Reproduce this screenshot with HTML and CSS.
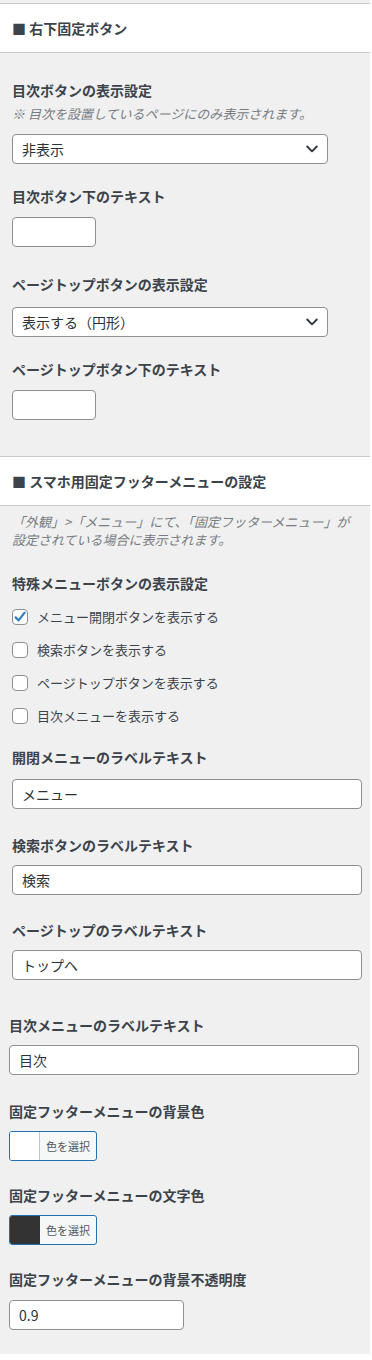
FILE: index.html
```html
<!DOCTYPE html>
<html lang="ja">
<head>
<meta charset="utf-8">
<title>設定</title>
<link rel="stylesheet" href="styles.css">
</head>
<body>
<div class="page">
  <section class="sec sec-first">
    <h2 class="sec-head">■ 右下固定ボタン</h2>
    <div class="sec-body body-1">
      <div class="field">
        <div class="label">目次ボタンの表示設定</div>
        <p class="note">※ 目次を設置しているページにのみ表示されます。</p>
        <div class="select">
          <span>非表示</span>
          <svg class="chev" width="12" height="8" viewBox="0 0 12 8"><path d="M1.2 1.5 L6 6.3 L10.8 1.5" fill="none" stroke="#2c3338" stroke-width="1.8" stroke-linecap="round" stroke-linejoin="round"/></svg>
        </div>
      </div>
      <div class="field mt-22">
        <div class="label">目次ボタン下のテキスト</div>
        <div class="input input-sm"></div>
      </div>
      <div class="field mt-27">
        <div class="label lb-13">ページトップボタンの表示設定</div>
        <div class="select">
          <span>表示する（円形）</span>
          <svg class="chev" width="12" height="8" viewBox="0 0 12 8"><path d="M1.2 1.5 L6 6.3 L10.8 1.5" fill="none" stroke="#2c3338" stroke-width="1.8" stroke-linecap="round" stroke-linejoin="round"/></svg>
        </div>
      </div>
      <div class="field mt-22">
        <div class="label">ページトップボタン下のテキスト</div>
        <div class="input input-sm"></div>
      </div>
    </div>
  </section>

  <section class="sec">
    <h2 class="sec-head">■ スマホ用固定フッターメニューの設定</h2>
    <div class="sec-body body-2">
      <p class="note note-top">「外観」&gt;「メニュー」にて、「固定フッターメニュー」が設定されている場合に表示されます。</p>
      <div class="field mt-24">
        <div class="label lb-14">特殊メニューボタンの表示設定</div>
        <ul class="checks">
          <li class="check">
            <span class="box">
              <svg width="16" height="16" viewBox="0 0 16 16"><path d="M3.6 8.4 L6.6 11.4 L12.6 3.6" fill="none" stroke="#3582c4" stroke-width="2.3" stroke-linecap="round" stroke-linejoin="round"/></svg>
            </span>
            <span>メニュー開閉ボタンを表示する</span>
          </li>
          <li class="check"><span class="box"></span><span>検索ボタンを表示する</span></li>
          <li class="check"><span class="box"></span><span>ページトップボタンを表示する</span></li>
          <li class="check"><span class="box"></span><span>目次メニューを表示する</span></li>
        </ul>
      </div>
      <div class="field mt-21">
        <div class="label lb-12">開閉メニューのラベルテキスト</div>
        <div class="input input-full">メニュー</div>
      </div>
      <div class="field mt-26">
        <div class="label lb-10">検索ボタンのラベルテキスト</div>
        <div class="input input-full">検索</div>
      </div>
      <div class="field mt-25">
        <div class="label lb-10">ページトップのラベルテキスト</div>
        <div class="input input-full">トップへ</div>
      </div>
    </div>
    <div class="sec-body body-3">
      <div class="field">
        <div class="label lb-10">目次メニューのラベルテキスト</div>
        <div class="input input-full">目次</div>
      </div>
      <div class="field mt-26">
        <div class="label lb-10">固定フッターメニューの背景色</div>
        <div class="color-btn">
          <span class="swatch sw-white"></span>
          <span class="color-text">色を選択</span>
        </div>
      </div>
      <div class="field mt-24">
        <div class="label lb-10">固定フッターメニューの文字色</div>
        <div class="color-btn">
          <span class="swatch sw-dark"></span>
          <span class="color-text">色を選択</span>
        </div>
      </div>
      <div class="field mt-24">
        <div class="label">固定フッターメニューの背景不透明度</div>
        <div class="input input-md">0.9</div>
      </div>
    </div>
  </section>
</div>
</body>
</html>
```

FILE: styles.css
```css
* {
  box-sizing: border-box;
}

html, body {
  margin: 0;
  padding: 0;
  background: #ffffff;
}

body {
  font-family: "Noto Sans CJK JP", "Noto Sans", sans-serif;
  color: #3c434a;
  -webkit-font-smoothing: antialiased;
}

.page {
  width: 370px;
  padding-top: 3px;
  background: #f0f0f1;
}

.sec-first {
  background: #ffffff;
}

.sec-head {
  margin: 0;
  height: 50px;
  padding: 0 12px;
  display: flex;
  align-items: center;
  background: #ffffff;
  border-top: 1px solid #c8c9cc;
  border-bottom: 1px solid #c8c9cc;
  font-size: 14px;
  font-weight: 700;
  line-height: 20px;
  color: #3c434a;
}

.sec-body {
  background: #f0f0f1;
}

.body-1 {
  padding: 27px 12px 36px;
}

.body-2 {
  padding: 7px 12px 0;
}

.body-3 {
  padding: 35px 9px 24px;
}

.field {
  display: flex;
  flex-direction: column;
  align-items: flex-start;
}

.mt-21 { margin-top: 21px; }
.mt-22 { margin-top: 22px; }
.mt-24 { margin-top: 24px; }
.mt-25 { margin-top: 25px; }
.mt-26 { margin-top: 26px; }
.mt-27 { margin-top: 27px; }

.label {
  font-size: 14px;
  font-weight: 700;
  line-height: 20px;
  color: #3c434a;
  margin-bottom: 11px;
  white-space: nowrap;
}

.lb-10 { margin-bottom: 10px; }
.lb-12 { margin-bottom: 12px; }
.lb-13 { margin-bottom: 13px; }
.lb-14 { margin-bottom: 14px; }

.note {
  margin: -6px 0 11px;
  font-size: 13px;
  line-height: 18px;
  font-style: italic;
  color: #787c82;
}

.note-top {
  margin: 0;
}

.select {
  width: 316px;
  height: 30px;
  padding: 0 9px 0 9px;
  display: flex;
  align-items: center;
  justify-content: space-between;
  background: #ffffff;
  border: 1px solid #8c8f94;
  border-radius: 4px;
  font-size: 14px;
  line-height: 20px;
  color: #2c3338;
}

.chev {
  display: block;
}

.input {
  height: 30px;
  padding: 0 9px;
  display: flex;
  align-items: center;
  background: #ffffff;
  border: 1px solid #8c8f94;
  border-radius: 4px;
  font-size: 14px;
  line-height: 20px;
  color: #2c3338;
}

.input-sm { width: 84px; }
.input-full { width: 350px; }
.input-md { width: 175px; padding-left: 9px; }

.checks {
  list-style: none;
  margin: 0;
  padding: 0;
  display: flex;
  flex-direction: column;
  gap: 13px;
}

.check {
  display: flex;
  align-items: center;
  gap: 9px;
  height: 20px;
  font-size: 13px;
  line-height: 20px;
  color: #3c434a;
}

.box {
  width: 16px;
  height: 16px;
  flex: none;
  display: block;
  background: #ffffff;
  border: 1px solid #8c8f94;
  border-radius: 4px;
  position: relative;
}

.box svg {
  position: absolute;
  left: -1px;
  top: -1px;
}

.color-btn {
  width: 88px;
  height: 30px;
  display: flex;
  border: 1px solid #2271b1;
  border-radius: 3px;
  overflow: hidden;
  background: #f6f7f7;
}

.swatch {
  width: 30px;
  flex: none;
  border-right: 1px solid #c3c4c7;
}

.sw-white { background: #ffffff; }
.sw-dark { background: #333333; border-right-color: #333333; }

.color-text {
  flex: 1;
  display: flex;
  align-items: center;
  justify-content: center;
  font-size: 11px;
  line-height: 14px;
  color: #50575e;
}
```
